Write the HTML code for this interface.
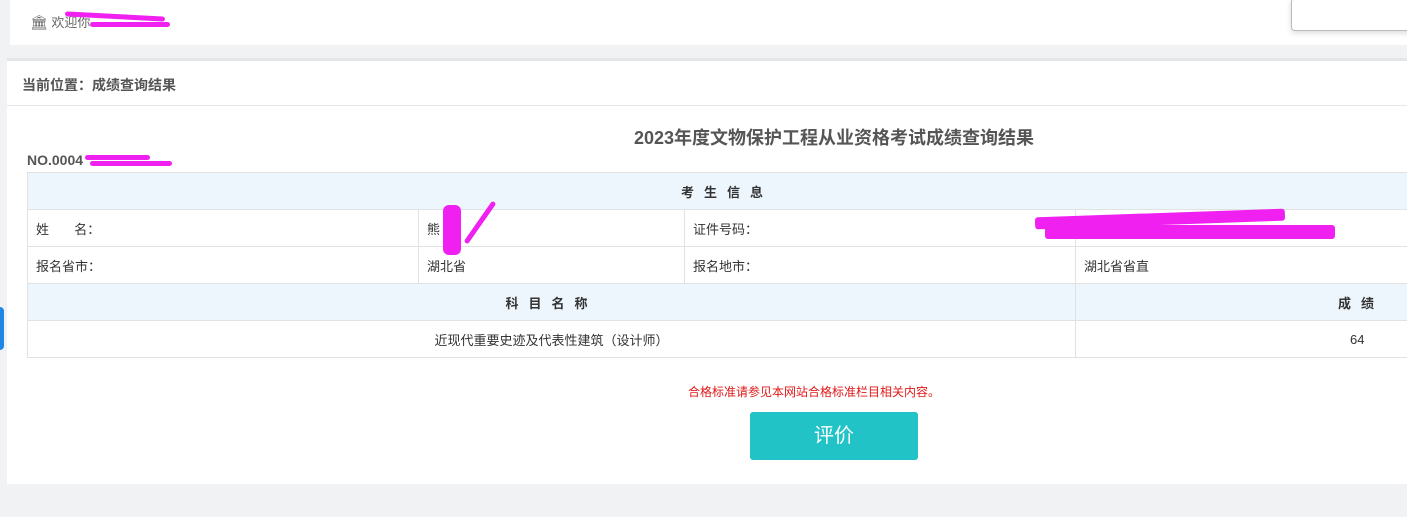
<!DOCTYPE html>
<html><head><meta charset="utf-8"><style>
*{margin:0;padding:0;box-sizing:border-box}
body{width:1407px;height:517px;background:#f1f2f4;font-family:"Liberation Sans","Noto Sans CJK SC",sans-serif;position:relative;overflow:hidden;color:#333}
.top{position:absolute;left:10px;top:0;width:1397px;height:45px;background:#fff}
.welcome{position:absolute;left:30px;top:12px;font-size:13px;color:#666}
.pop{position:absolute;left:1291px;top:-2px;width:130px;height:33px;background:#fff;border:1px solid #bbb;border-radius:4px;box-shadow:0 2px 6px rgba(0,0,0,.15)}
.panel{position:absolute;left:7px;top:58px;width:1400px;height:426px;background:#fff;border-top:3px solid #e3e6e8}
.crumb{height:45px;border-bottom:1px solid #e8e8e8;font-size:14px;font-weight:bold;color:#555;padding:14px 0 0 15px}
.title{position:absolute;left:627px;top:63px;font-size:18px;font-weight:bold;color:#555}
.no{position:absolute;left:20px;top:91px;font-size:14px;font-weight:bold;color:#555}
table{position:absolute;left:20px;top:111px;border-collapse:collapse;font-size:13px;width:1400px}
td{border:1px solid #e2e2e2;height:37px;padding:0 8px;color:#333}
.h{background:#eef6fd;text-align:center;font-weight:bold;letter-spacing:10px}
.red{position:absolute;left:681px;top:322px;font-size:12px;color:#e01818}
.btn{position:absolute;left:743px;top:351px;width:168px;height:48px;background:#22c3c6;border-radius:3px;color:#fff;font-size:20px;text-align:center;line-height:48px}
.mark{position:absolute;height:5px;background:#f020f0;border-radius:3px}
</style></head><body>
<div class="top"></div>
<div class="welcome"><span style="font-size:14px">🏛</span> 欢迎你</div>
<div class="mark" style="left:65px;top:14px;width:100px;transform:rotate(3deg)"></div>
<div class="mark" style="left:90px;top:22px;width:80px"></div>
<div class="pop"></div>
<div style="position:absolute;left:0;top:307px;width:4px;height:43px;background:#1e88e5;border-radius:0 4px 4px 0"></div>
<div class="panel">
<div class="crumb">当前位置：成绩查询结果</div>
<div class="title">2023年度文物保护工程从业资格考试成绩查询结果</div>
<div class="no">NO.0004</div>
<table>
<tr><td colspan="5" class="h">考生信息</td></tr>
<tr><td style="width:391px">姓&nbsp;&nbsp;&nbsp;&nbsp;&nbsp;&nbsp;&nbsp;名：</td><td style="width:266px">熊</td><td style="width:391px">证件号码：</td><td colspan="2"></td></tr>
<tr><td>报名省市：</td><td>湖北省</td><td>报名地市：</td><td colspan="2">湖北省省直</td></tr>
<tr><td colspan="3" class="h">科目名称</td><td colspan="2" class="h" style="text-align:left;padding-left:262px">成绩</td></tr>
<tr><td colspan="3" style="text-align:center">近现代重要史迹及代表性建筑（设计师）</td><td colspan="2" style="padding-left:274px">64</td></tr>
</table>
<div class="red">合格标准请参见本网站合格标准栏目相关内容。</div>
<div class="btn">评价</div>
</div>
<div class="mark" style="left:85px;top:155px;width:65px"></div>
<div class="mark" style="left:90px;top:161px;width:82px"></div>
<div class="mark" style="left:1035px;top:213px;width:250px;height:12px;transform:rotate(-2deg)"></div>
<div class="mark" style="left:1045px;top:225px;width:290px;height:14px"></div>
<div class="mark" style="left:443px;top:205px;width:18px;height:50px;border-radius:6px"></div>
<div class="mark" style="left:455px;top:220px;width:50px;height:5px;transform:rotate(-55deg)"></div>
</body></html>
